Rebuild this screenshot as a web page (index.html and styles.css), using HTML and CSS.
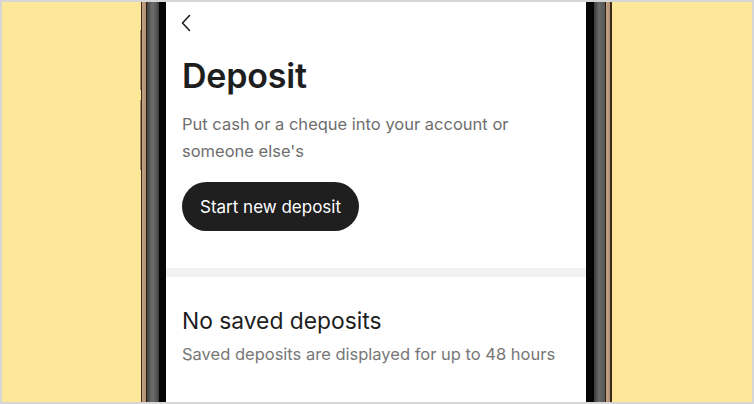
FILE: index.html
```html
<!DOCTYPE html>
<html lang="en">
<head>
<meta charset="utf-8">
<title>Deposit</title>
<link rel="stylesheet" href="styles.css">
</head>
<body>
<div class="canvas">
  <div class="phone">
    <div class="bumps">
      <span class="bump bump-a"></span>
      <span class="bump bump-b"></span>
    </div>
    <div class="frame">
      <div class="screen">
        <section class="top">
          <button class="back" aria-label="Back">
            <svg width="12" height="18" viewBox="0 0 12 18" fill="none"><path d="M9.5 1.5 L2.5 9 L9.5 16.5" stroke="#1e1e1e" stroke-width="1.6" stroke-linecap="round" stroke-linejoin="round"/></svg>
          </button>
          <h1 class="title">Deposit</h1>
          <p class="lead">Put cash or a cheque into your account or someone else's</p>
          <button class="primary">Start new deposit</button>
        </section>
        <div class="band"></div>
        <section class="saved">
          <h2 class="saved-title">No saved deposits</h2>
          <p class="saved-note">Saved deposits are displayed for up to 48 hours</p>
        </section>
      </div>
    </div>
  </div>
</div>
</body>
</html>
```

FILE: styles.css
```css
* { box-sizing: border-box; }
html, body { margin: 0; padding: 0; }
body {
  width: 754px;
  height: 404px;
  overflow: hidden;
  font-family: Inter, "Noto Sans", "Liberation Sans", sans-serif;
}
.canvas {
  width: 754px;
  height: 404px;
  border: 2px solid #d6d6d6;
  background: #ffe799;
  display: flex;
  padding-left: 137px;
  overflow: hidden;
}
.phone {
  display: flex;
  height: 100%;
}
.bumps {
  width: 2px;
  display: flex;
  flex-direction: column;
  align-items: flex-end;
  padding-top: 28px;
  gap: 10px;
}
.bump {
  width: 1px;
  background: #a8896a;
}
.bump-a { height: 60px; }
.bump-b { height: 70px; }
.frame {
  width: 471px;
  height: 100%;
  padding: 0 26px 0 25px;
  background: linear-gradient(to right,
    #3a2a1c 0px, #3a2a1c 1px,
    #c2a385 1px, #b09070 5px,
    #2a2018 5px, #2a2018 6px,
    #3e3e3e 6px, #6e6e6e 11px, #5a5a5a 15px, #3a3a3a 18px,
    #050505 18px, #050505 25px,
    #ffffff 25px, #ffffff 445px,
    #050505 445px, #050505 453px,
    #3a3a3a 453px, #6a6a6a 458px, #555555 464px,
    #2a2018 464px, #2a2018 465px,
    #c2a385 465px, #b09070 469px,
    #3a2a1c 469px, #3a2a1c 471px);
}
.screen {
  width: 420px;
  height: 100%;
  background: #ffffff;
  display: flex;
  flex-direction: column;
}
.top {
  padding: 12px 16px 0 16px;
  display: flex;
  flex-direction: column;
  align-items: flex-start;
}
.back {
  border: 0;
  background: none;
  padding: 0;
  margin: 0 0 0 -2px;
  width: 12px;
  height: 18px;
  display: block;
}
.back svg { display: block; }
.title {
  margin: 24px 0 0 0;
  font-size: 34px;
  line-height: 40px;
  font-weight: 600;
  color: #1e1e1e;
  letter-spacing: -0.2px;
}
.lead {
  margin: 15px 0 0 0;
  width: 370px;
  font-size: 16.5px;
  line-height: 27px;
  color: #6e6e6e;
}
.primary {
  margin-top: 17px;
  height: 49px;
  padding: 0 18px;
  border: 0;
  border-radius: 25px;
  background: #1f1f1f;
  color: #ffffff;
  font-family: inherit;
  font-size: 17px;
}
.band {
  margin-top: 37px;
  height: 9px;
  background: #f2f2f2;
}
.saved {
  padding: 30px 16px 0 16px;
}
.saved-title {
  margin: 0;
  font-size: 22.8px;
  line-height: 28px;
  font-weight: 400;
  color: #1e1e1e;
}
.saved-note {
  margin: 8px 0 0 0;
  font-size: 16.5px;
  line-height: 22px;
  color: #777777;
}
```
